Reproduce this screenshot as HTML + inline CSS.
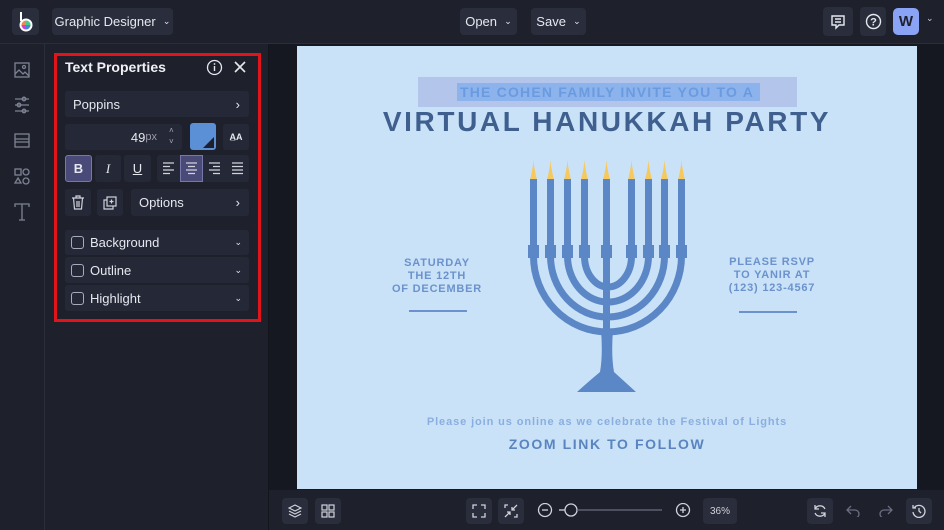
<!DOCTYPE html>
<html><head><meta charset="utf-8"><style>
*{margin:0;padding:0;box-sizing:border-box}
body{width:944px;height:530px;overflow:hidden;background:#161821;font-family:"Liberation Sans",sans-serif;color:#e6e8ef;position:relative}
.abs{position:absolute}
.top{left:0;top:0;width:944px;height:44px;background:#1e202b;border-bottom:1px solid #2a2d3a}
.btn{position:absolute;background:#2a2d3b;border-radius:4px;font-size:13px;color:#e6e8ef;display:flex;align-items:center;justify-content:center}
.rail{left:0;top:44px;width:45px;height:486px;background:#1e202b;border-right:1px solid #2a2d3a}
.panel{left:45px;top:44px;width:224px;height:486px;background:#1e202b;border-right:1px solid #14151c}
.pb{position:absolute;background:#252837;border-radius:3px;font-size:13px;color:#e6e8ef;display:flex;align-items:center}
.chk{width:13px;height:13px;border:1.5px solid #aab;border-radius:3px;margin:0 6px 0 6px}
.bot{left:269px;top:490px;width:675px;height:40px;background:#1e202b}
.ib{position:absolute;width:26px;height:26px;background:#2a2d3b;border-radius:4px;display:flex;align-items:center;justify-content:center}
svg{display:block}
</style></head><body>
<div class="abs top">
 <div class="btn" style="left:12px;top:8px;width:27px;height:27px;background:#2a2d3b">
  <svg width="18" height="22" viewBox="0 0 18 22"><rect x="3" y="1" width="2" height="9" fill="#fff"/><circle cx="9" cy="14" r="6.5" fill="#fff"/><circle cx="9" cy="14" r="4.5" fill="#e85"/><path d="M9 14 L9 9.5 A4.5 4.5 0 0 1 13.5 14Z" fill="#4c8"/><path d="M9 14 L13.5 14 A4.5 4.5 0 0 1 9 18.5Z" fill="#48d"/><path d="M9 14 L9 18.5 A4.5 4.5 0 0 1 4.5 14Z" fill="#c4c"/></svg>
 </div>
 <div class="btn" style="left:52px;top:8px;width:121px;height:27px">Graphic Designer&nbsp;&nbsp;<span style="font-size:9px">&#8964;</span></div>
 <div class="btn" style="left:460px;top:8px;width:57px;height:27px">Open&nbsp;&nbsp;<span style="font-size:9px">&#8964;</span></div>
 <div class="btn" style="left:531px;top:8px;width:55px;height:27px">Save&nbsp;&nbsp;<span style="font-size:9px">&#8964;</span></div>
 <div class="btn" style="left:823px;top:7px;width:30px;height:29px"><svg width="16" height="16" viewBox="0 0 16 16" fill="none" stroke="#e6e8ef" stroke-width="1.4"><path d="M2 2h12v9H9l-3 3v-3H2z"/><path d="M5 5h6M5 8h6"/></svg></div>
 <div class="btn" style="left:860px;top:7px;width:26px;height:29px"><svg width="17" height="17" viewBox="0 0 17 17"><circle cx="8.5" cy="8.5" r="7" fill="none" stroke="#e6e8ef" stroke-width="1.4"/><text x="8.5" y="12.5" font-size="11" text-anchor="middle" fill="#e6e8ef" font-family="Liberation Sans" font-weight="bold">?</text></svg></div>
 <div class="btn" style="left:893px;top:8px;width:26px;height:27px;background:#8ba3f5;color:#1e202b;font-weight:bold;font-size:15px;border-radius:5px">W</div>
 <div class="abs" style="left:926px;top:13px;font-size:9px;color:#ccd">&#8964;</div>
</div>
<div class="abs rail">
 <svg class="abs" style="left:13px;top:17px" width="18" height="190" viewBox="0 0 18 190" fill="none" stroke="#7d8294" stroke-width="1.3">
  <rect x="2" y="2" width="14" height="14"/><path d="M2 13l4-4 4 4 2-2 4 4"/><circle cx="11" cy="6" r="1.5"/>
  <path d="M2 38h14M2 44h14M2 50h14"/><circle cx="11" cy="38" r="1.8"/><circle cx="6" cy="44" r="1.8"/><circle cx="11" cy="50" r="1.8"/>
  <rect x="2" y="73" width="14" height="13"/><path d="M2 78h14M2 81h14"/>
  <rect x="2" y="108" width="6" height="6"/><circle cx="13" cy="111" r="3"/><path d="M5 117l3 5H2z"/><circle cx="13" cy="120" r="3"/>
  <path d="M2 146v-3h14v3M9 143v16M6 159h6"/>
 </svg>
</div>
<div class="abs panel">
 <div class="abs" style="left:9px;top:9px;width:207px;height:269px;border:3px solid #e0141a"></div>
 <div class="abs" style="left:20px;top:15px;font-size:14px;font-weight:bold;color:#f0f1f5">Text Properties</div>
 <svg class="abs" style="left:161px;top:15px" width="17" height="17"><circle cx="8.5" cy="8.5" r="7" fill="none" stroke="#e6e8ef" stroke-width="1.3"/><path d="M8.5 7v5" stroke="#e6e8ef" stroke-width="1.4"/><circle cx="8.5" cy="5" r="0.9" fill="#e6e8ef"/></svg>
 <svg class="abs" style="left:189px;top:17px" width="12" height="12"><path d="M1 1l10 10M11 1L1 11" stroke="#e6e8ef" stroke-width="1.6"/></svg>
 <div class="pb" style="left:20px;top:47px;width:184px;height:26px;padding-left:8px">Poppins<span style="position:absolute;right:9px;font-size:13px">&#8250;</span></div>
 <div class="pb" style="left:20px;top:80px;width:117px;height:26px;justify-content:flex-end;padding-right:25px">49<span style="color:#99a;font-size:11px">px</span></div>
 <div class="abs" style="left:124px;top:81px;font-size:8px;color:#aab;line-height:11px">&#708;<br>&#709;</div>
 <div class="abs" style="left:145px;top:79px;width:26px;height:27px;background:#5b8fd6;border-radius:3px"><svg width="26" height="27"><path d="M24 14L24 25L13 25Z" fill="#1e202b"/></svg></div>
 <div class="pb" style="left:178px;top:80px;width:26px;height:26px;justify-content:center;font-size:9px;font-weight:bold">A̲A</div>
 <div class="pb" style="left:20px;top:111px;width:27px;height:27px;justify-content:center;background:#4a4a78;border:1px solid #7877aa;font-weight:bold">B</div>
 <div class="pb" style="left:50px;top:111px;width:26px;height:27px;justify-content:center;font-family:'Liberation Serif';font-style:italic">I</div>
 <div class="pb" style="left:79px;top:111px;width:27px;height:27px;justify-content:center;text-decoration:underline">U</div>
 <div class="pb" style="left:112px;top:111px;width:92px;height:27px"></div>
 <div class="abs" style="left:135px;top:111px;width:23px;height:27px;background:#4a4a78;border:1px solid #7877aa"></div>
 <svg class="abs" style="left:117px;top:118px" width="86" height="13" stroke="#d0d2dc" stroke-width="1.2"><path d="M1 1h11M1 4.5h7M1 8h11M1 11.5h7"/><path d="M24 1h11M26 4.5h7M24 8h11M26 11.5h7"/><path d="M47 1h11M51 4.5h7M47 8h11M51 11.5h7"/><path d="M70 1h11M70 4.5h11M70 8h11M70 11.5h11"/></svg>
 <div class="pb" style="left:20px;top:145px;width:26px;height:27px;justify-content:center"><svg width="14" height="15" fill="none" stroke="#d0d2dc" stroke-width="1.2"><path d="M1 3h12M5 3V1h4v2M2.5 3l1 11h7l1-11M6 6v6M8 6v6"/></svg></div>
 <div class="pb" style="left:52px;top:145px;width:26px;height:27px;justify-content:center"><svg width="14" height="14" fill="none" stroke="#d0d2dc" stroke-width="1.2"><rect x="4" y="1" width="9" height="9"/><path d="M4 4H1v9h9v-3M8.5 3.5v4M6.5 5.5h4"/></svg></div>
 <div class="pb" style="left:86px;top:145px;width:118px;height:27px;padding-left:8px">Options<span style="position:absolute;right:9px">&#8250;</span></div>
 <div class="pb" style="left:20px;top:186px;width:184px;height:25px"><div class="chk"></div>Background<span style="position:absolute;right:7px;font-size:9px">&#8964;</span></div>
 <div class="pb" style="left:20px;top:213px;width:184px;height:26px"><div class="chk"></div>Outline<span style="position:absolute;right:7px;font-size:9px">&#8964;</span></div>
 <div class="pb" style="left:20px;top:241px;width:184px;height:26px"><div class="chk"></div>Highlight<span style="position:absolute;right:7px;font-size:9px">&#8964;</span></div>
</div>
<div class="abs" style="left:297px;top:46px;width:620px;height:443px;background:#c9e2f8">
 <div class="abs" style="left:121px;top:31px;width:379px;height:30px;background:#b3c5ea"></div>
 <div class="abs" style="left:160px;top:37px;width:303px;height:18px;background:#8cb3ec"></div>
 <div class="abs" style="left:0;top:37px;width:620px;text-align:center;font-size:14px;font-weight:bold;color:#6a9be0;letter-spacing:1.2px;line-height:18px">THE COHEN FAMILY INVITE YOU TO A</div>
 <div class="abs" style="left:0;top:60px;width:620px;text-align:center;font-size:28px;font-weight:bold;color:#3f5f8f;letter-spacing:2.6px">VIRTUAL HANUKKAH PARTY</div>
 <div class="abs" style="left:90px;top:211px;width:100px;text-align:center;font-size:11px;font-weight:bold;color:#6b92cc;line-height:13px;letter-spacing:.8px">SATURDAY<br>THE 12TH<br>OF DECEMBER</div>
 <div class="abs" style="left:112px;top:264px;width:58px;height:2px;background:#6b92cc"></div>
 <div class="abs" style="left:425px;top:210px;width:100px;text-align:center;font-size:11px;font-weight:bold;color:#6b92cc;line-height:13px;letter-spacing:.8px">PLEASE RSVP<br>TO YANIR AT<br>(123) 123-4567</div>
 <div class="abs" style="left:442px;top:265px;width:58px;height:2px;background:#6b92cc"></div>
 <div class="abs" style="left:0;top:370px;width:620px;text-align:center;font-size:11px;font-weight:bold;color:#8aaee0;letter-spacing:.9px">Please join us online as we celebrate the Festival of Lights</div>
 <div class="abs" style="left:0;top:390px;width:620px;text-align:center;font-size:14px;font-weight:bold;color:#5a84c0;letter-spacing:1.6px">ZOOM LINK TO FOLLOW</div>
</div>
<svg class="abs" style="left:0;top:0" width="944" height="530">
 <g fill="#f7c85c"><path d="M530 180q3-12 3.5-20q.5 8 3.5 20z"/><path d="M547 180q3-12 3.5-20q.5 8 3.5 20z"/><path d="M564 180q3-12 3.5-20q.5 8 3.5 20z"/><path d="M581 180q3-12 3.5-20q.5 8 3.5 20z"/><path d="M603 180q3-12 3.5-20q.5 8 3.5 20z"/><path d="M628 180q3-12 3.5-20q.5 8 3.5 20z"/><path d="M645 180q3-12 3.5-20q.5 8 3.5 20z"/><path d="M661 180q3-12 3.5-20q.5 8 3.5 20z"/><path d="M678 180q3-12 3.5-20q.5 8 3.5 20z"/></g>
 <g fill="#5b87c6">
  <rect x="530" y="179" width="7" height="70"/><rect x="547" y="179" width="7" height="70"/><rect x="564" y="179" width="7" height="70"/><rect x="581" y="179" width="7" height="70"/><rect x="603" y="179" width="7" height="70"/><rect x="628" y="179" width="7" height="70"/><rect x="645" y="179" width="7" height="70"/><rect x="661" y="179" width="7" height="70"/><rect x="678" y="179" width="7" height="70"/>
  <rect x="528" y="245" width="11" height="13"/><rect x="545" y="245" width="11" height="13"/><rect x="562" y="245" width="11" height="13"/><rect x="579" y="245" width="11" height="13"/><rect x="601" y="245" width="11" height="13"/><rect x="626" y="245" width="11" height="13"/><rect x="643" y="245" width="11" height="13"/><rect x="659" y="245" width="11" height="13"/><rect x="676" y="245" width="11" height="13"/>
  <path d="M601 330 Q603 355 600 372 Q588 382 577 392 L636 392 Q625 382 614 372 Q611 355 613 330Z"/>
 </g>
 <g fill="none" stroke="#5b87c6" stroke-width="7">
  <path d="M533.5 256 A74 76 0 0 0 681.5 256"/>
  <path d="M550.5 256 A57 61 0 0 0 664.5 256"/>
  <path d="M567.5 256 A40.5 46 0 0 0 648.5 256"/>
  <path d="M584.5 256 A23.5 31 0 0 0 631.5 256"/>
  <path d="M606.5 256 V335"/>
 </g>
</svg>
<div class="abs bot">
 <div class="ib" style="left:13px;top:8px"><svg width="14" height="14" fill="none" stroke="#d0d2dc" stroke-width="1.2"><path d="M7 1l6 3-6 3-6-3z"/><path d="M1 7l6 3 6-3M1 10l6 3 6-3"/></svg></div>
 <div class="ib" style="left:46px;top:8px"><svg width="14" height="14" fill="none" stroke="#d0d2dc" stroke-width="1.2"><rect x="1" y="1" width="5" height="5"/><rect x="8" y="1" width="5" height="5"/><rect x="1" y="8" width="5" height="5"/><rect x="8" y="8" width="5" height="5"/></svg></div>
 <div class="ib" style="left:197px;top:8px"><svg width="14" height="14" fill="none" stroke="#d0d2dc" stroke-width="1.3"><path d="M1 5V1h4M9 1h4v4M13 9v4H9M5 13H1V9"/></svg></div>
 <div class="ib" style="left:229px;top:8px"><svg width="14" height="14" fill="none" stroke="#d0d2dc" stroke-width="1.3"><path d="M1 4V1h3M13 1L8 6M8 3v3h3M10 13h3v-3M1 13l5-5M3 8h3v3"/></svg></div>
 <svg class="abs" style="left:268px;top:13px" width="160" height="16" fill="none" stroke="#d0d2dc" stroke-width="1.3"><circle cx="8" cy="7" r="6.5"/><path d="M5 7h6"/><path d="M22 7h6"/><circle cx="34" cy="7" r="6"/><path d="M40 7h85" stroke="#6a6e80"/><circle cx="146" cy="7" r="6.5"/><path d="M143 7h6M146 4v6"/></svg>
 <div class="ib" style="left:434px;top:8px;width:34px;font-size:10px;color:#d0d2dc">36%</div>
 <div class="ib" style="left:538px;top:8px"><svg width="14" height="14" fill="none" stroke="#d0d2dc" stroke-width="1.3"><path d="M12 5A5.5 5.5 0 0 0 2 5M2 1v4h4M2 9a5.5 5.5 0 0 0 10 0M12 13V9H8"/></svg></div>
 <svg class="abs" style="left:577px;top:15px" width="14" height="12" fill="none" stroke="#6a6e80" stroke-width="1.3"><path d="M5 1L1 5l4 4M1 5h8a4 4 0 0 1 0 8"/></svg>
 <svg class="abs" style="left:610px;top:15px" width="14" height="12" fill="none" stroke="#6a6e80" stroke-width="1.3"><path d="M9 1l4 4-4 4M13 5H5a4 4 0 0 0 0 8"/></svg>
 <div class="ib" style="left:637px;top:8px"><svg width="14" height="14" fill="none" stroke="#d0d2dc" stroke-width="1.3"><path d="M2 4a6 6 0 1 1-1 4M1 1v3h3M7 4v3l2 2"/></svg></div>
</div>
</body></html>
